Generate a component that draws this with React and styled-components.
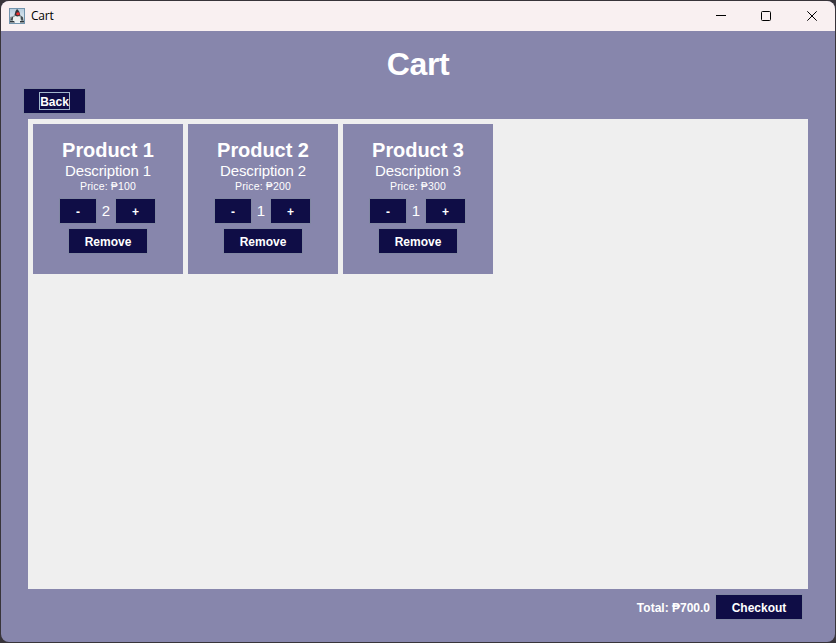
import React, { useState } from "react";
import styled, { createGlobalStyle } from "styled-components";

const GlobalStyle = createGlobalStyle`
  * { box-sizing: border-box; }
  body { margin: 0; background: #38343a; overflow: hidden; }
`;

const Desktop = styled.div`
  height: 643px;
  padding: 1px;
  background: #38343a;
  font-family: "Liberation Sans", Arial, sans-serif;
  color: #fff;
`;

const Window = styled.div`
  display: flex;
  flex-direction: column;
  height: 641px;
  border-radius: 8px;
  overflow: hidden;
  background: #8786ac;
`;

const TitleBar = styled.header`
  display: flex;
  align-items: center;
  height: 30px;
  flex: none;
  padding-left: 8px;
  background: #f9f0f1;
  color: #000;
`;

const WindowTitle = styled.span`
  flex: 1;
  margin-left: 6px;
  font: 12px/16px "Open Sans", "Noto Sans", sans-serif;
  letter-spacing: -0.25px;
`;

const WindowControl = styled.div`
  display: flex;
  align-items: center;
  justify-content: center;
  width: ${(p) => p.$width}px;
  height: 30px;
`;

const Heading = styled.h1`
  margin: 0;
  padding-top: 15px;
  height: 58px;
  font-size: 32px;
  line-height: 36px;
  letter-spacing: -0.4px;
  text-align: center;
`;

const Toolbar = styled.div`
  display: flex;
  height: 30px;
  padding-left: 23px;
`;

const Button = styled.button`
  display: flex;
  align-items: center;
  justify-content: center;
  width: ${(p) => p.$width}px;
  height: 24px;
  padding: 1px 0 0;
  border: 0;
  border-radius: 0;
  outline: none;
  background: #0f0d46;
  box-shadow: 0 0 0 1px rgba(122, 138, 153, 0.45);
  color: #fff;
  font: bold 12px/14px "Liberation Sans", Arial, sans-serif;
`;

const FocusedLabel = styled.span`
  display: flex;
  justify-content: center;
  width: 31px;
  height: 18px;
  margin-top: -1px;
  border: 1px solid #a3b8cc;
  line-height: 18px;
  white-space: nowrap;
`;

const ProductPanel = styled.main`
  display: flex;
  align-items: flex-start;
  gap: 5px;
  width: 780px;
  height: 470px;
  margin-left: 27px;
  padding: 5px;
  background: #efefef;
`;

const Card = styled.article`
  display: flex;
  flex-direction: column;
  align-items: center;
  width: 150px;
  height: 150px;
  padding-top: 14px;
  background: #8786ac;
  white-space: nowrap;
`;

const ProductName = styled.h2`
  margin: 0;
  font-size: 20px;
  line-height: 24px;
  letter-spacing: -0.05px;
`;

const Description = styled.p`
  margin: 0;
  font-size: 15px;
  line-height: 18px;
  letter-spacing: -0.12px;
`;

const Price = styled.p`
  margin: 0 0 2px;
  font-size: 10.5px;
  line-height: 12px;
  letter-spacing: 0.15px;
`;

const QuantityRow = styled.div`
  display: flex;
  justify-content: center;
  margin: 5px 0 6px;
  padding-right: 1px;
`;

const Quantity = styled.span`
  width: 20px;
  font-size: 15px;
  line-height: 24px;
  text-align: center;
`;

const Footer = styled.footer`
  display: flex;
  justify-content: flex-end;
  gap: 6px;
  padding: 6px 33px 0 0;
`;

const Total = styled.span`
  font-size: 12px;
  font-weight: bold;
  line-height: 26px;
`;

const products = [
  { id: 1, price: 100, quantity: 2 },
  { id: 2, price: 200, quantity: 1 },
  { id: 3, price: 300, quantity: 1 },
];

function JavaIcon() {
  return (
    <svg width="16" height="16" viewBox="0 0 16 16">
      <defs>
        <linearGradient id="sky" x1="0" y1="0" x2="0" y2="1">
          <stop offset="0" stopColor="#b4cbdc" />
          <stop offset="1" stopColor="#f4f7f9" />
        </linearGradient>
      </defs>
      <rect x=".5" y=".5" width="15" height="15" fill="url(#sky)" stroke="#7294ad" />
      <path d="M1 13V9l3-1 2-1h5l3 2 1 4Z" fill="#8e9a9f" />
      <path d="M1.5 12 3 9h1.5l-1 3ZM12 8l2 1.5v3l-2-1Z" fill="#454d51" />
      <path d="M4 13V9.5L6.5 8 11 8.5 12 13Z" fill="#edf0ee" />
      <path d="M8 1c1.5.8 3 3.8 3.3 6.5L8 8.5 5.5 7C6 4.5 6.7 2.3 8 1Z" fill="#30353a" />
      <ellipse cx="9" cy="5.7" rx="1.8" ry="1.5" fill="#ed3030" />
      <path d="M1 13h4l1 1.5H1Zm10 0h4v1.5h-4Z" fill="#31383d" />
    </svg>
  );
}

function ProductCard({ product, onChange, onRemove }) {
  return (
    <Card>
      <ProductName>Product {product.id}</ProductName>
      <Description>Description {product.id}</Description>
      <Price>Price: ₱{product.price}</Price>
      <QuantityRow>
        <Button $width={36} onClick={() => onChange(-1)}>-</Button>
        <Quantity>{product.quantity}</Quantity>
        <Button $width={39} onClick={() => onChange(1)}>+</Button>
      </QuantityRow>
      <Button $width={78} onClick={onRemove}>Remove</Button>
    </Card>
  );
}

export default function App() {
  const [items, setItems] = useState(products);
  const total = items.reduce((sum, p) => sum + p.price * p.quantity, 0);
  const change = (id, delta) =>
    setItems(items.map((p) => p.id === id ? { ...p, quantity: Math.max(1, p.quantity + delta) } : p));

  return (
    <Desktop>
      <GlobalStyle />
      <Window>
        <TitleBar>
          <JavaIcon />
          <WindowTitle>Cart</WindowTitle>
          <WindowControl $width={44}>
            <svg width="10" height="10"><path d="M0 4.5h10" stroke="#000" /></svg>
          </WindowControl>
          <WindowControl $width={46}>
            <svg width="10" height="10"><rect x=".5" y=".5" width="9" height="9" rx="1" fill="none" stroke="#000" /></svg>
          </WindowControl>
          <WindowControl $width={46}>
            <svg width="10" height="10"><path d="m.3.3 9.4 9.4m0-9.4L.3 9.7" stroke="#000" /></svg>
          </WindowControl>
        </TitleBar>
        <Heading>Cart</Heading>
        <Toolbar>
          <Button $width={61}><FocusedLabel>Back</FocusedLabel></Button>
        </Toolbar>
        <ProductPanel>
          {items.map((p) => (
            <ProductCard
              key={p.id}
              product={p}
              onChange={(delta) => change(p.id, delta)}
              onRemove={() => setItems(items.filter((item) => item.id !== p.id))}
            />
          ))}
        </ProductPanel>
        <Footer>
          <Total>Total: ₱{total.toFixed(1)}</Total>
          <Button $width={86}>Checkout</Button>
        </Footer>
      </Window>
    </Desktop>
  );
}
